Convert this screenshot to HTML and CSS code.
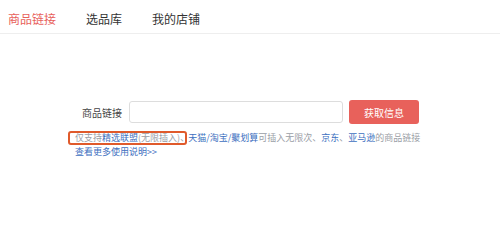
FILE: index.html
```html
<!DOCTYPE html>
<html lang="zh-CN">
<head>
<meta charset="utf-8">
<title>商品链接</title>
<link rel="stylesheet" href="styles.css">
</head>
<body>
<nav class="nav">
  <a class="nav-item active">商品链接</a>
  <a class="nav-item">选品库</a>
  <a class="nav-item">我的店铺</a>
</nav>
<main class="main">
  <div class="form-row">
    <label class="label">商品链接</label>
    <input class="input" type="text">
    <button class="btn">获取信息</button>
  </div>
  <div class="tips">
    <p class="tip-line"><span class="highlight"><span class="gray">仅支持</span><span class="blue">精选联盟</span><span class="gray">(无限插入)</span><span class="gray tight">、</span></span><span class="blue after">天猫/淘宝/聚划算</span><span class="gray">可插入无限次、</span><span class="blue">京东</span><span class="gray">、</span><span class="blue">亚马逊</span><span class="gray">的商品链接</span></p>
    <p class="tip-line"><a class="blue more">查看更多使用说明&gt;&gt;</a></p>
  </div>
</main>
</body>
</html>
```

FILE: styles.css
```css
* { box-sizing: border-box; }
html, body {
  margin: 0;
  padding: 0;
  background: #fff;
  font-family: "Noto Sans CJK SC", "Noto Sans", sans-serif;
}
.nav {
  display: flex;
  gap: 30px;
  padding: 12px 8px 7px;
  border-bottom: 1px solid #eeeeee;
}
.nav-item {
  font-size: 12px;
  line-height: 14px;
  color: #333;
}
.nav-item.active { color: #e8615b; }
.main {
  width: 364px;
  margin: 66px auto 0;
}
.form-row {
  display: flex;
  align-items: center;
  justify-content: center;
  height: 24px;
}
.label {
  font-size: 10px;
  color: #444;
  margin-right: 7px;
  padding-left: 1px;
}
.input {
  width: 214px;
  height: 22px;
  border: 1px solid #dddddd;
  border-radius: 3px;
  margin: 0 6px 0 0;
  padding: 0 6px;
  outline: none;
}
.btn {
  width: 70px;
  height: 24px;
  border: none;
  border-radius: 3px;
  background: #e8615b;
  color: #fff;
  font-family: inherit;
  font-size: 10px;
  padding: 0;
}
.tips { margin-top: 7px; }
.tip-line {
  margin: 0;
  font-size: 9px;
  line-height: 13px;
  white-space: nowrap;
}
.highlight {
  display: inline-block;
  line-height: 10px;
  border: 2px solid #e05a2b;
  border-radius: 3px;
  padding: 0 0 0 5px;
  vertical-align: baseline;
}
.tight { margin-right: -4px; }
.after { margin-left: 1px; }
.gray { color: #9a9ea6; }
.blue { color: #3d6fc0; }
.more { padding-left: 7px; }
```
